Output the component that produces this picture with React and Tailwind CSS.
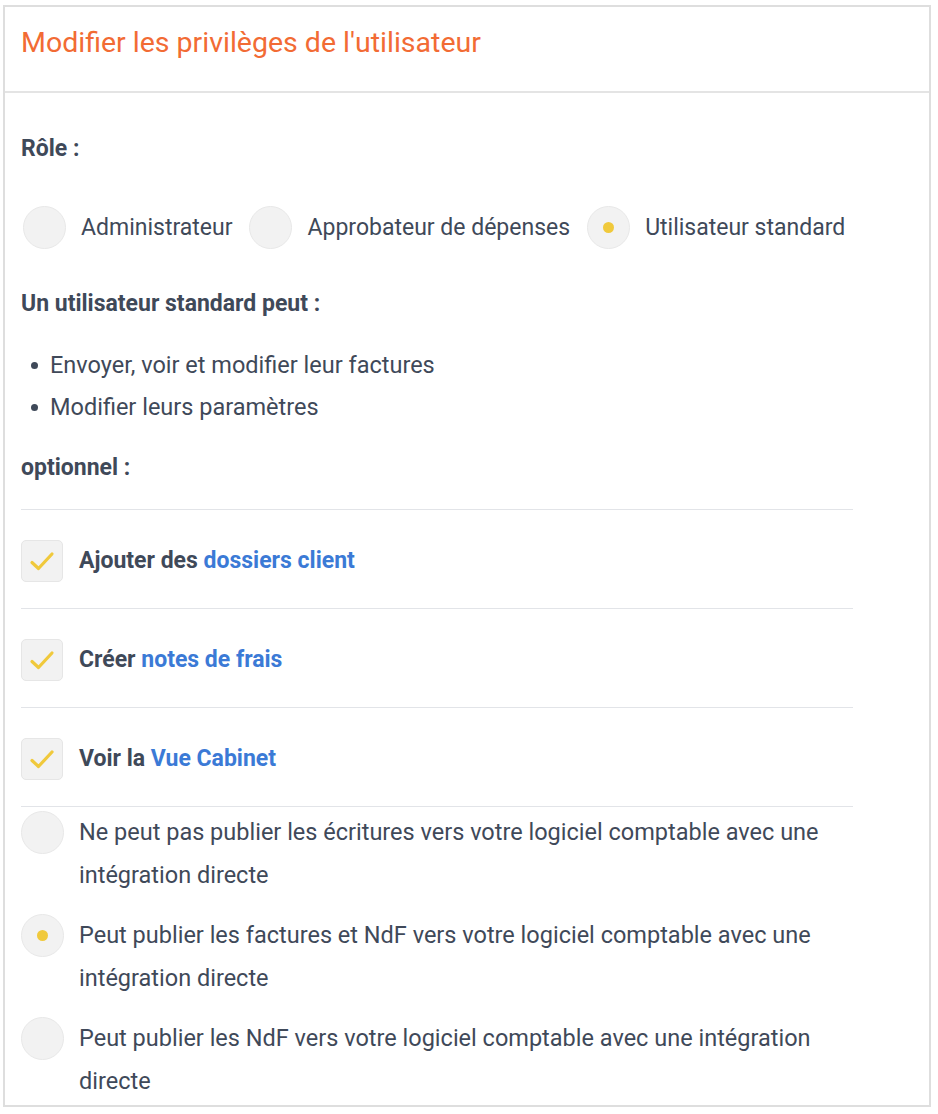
import React from 'react';

const TEXT = 'text-[#3f4959]';

function RadioDot({ checked }) {
  return (
    <span className="w-[43px] h-[43px] shrink-0 rounded-full bg-[#f2f2f2] border border-[#e8e8e8] flex items-center justify-center">
      {checked && <span className="w-[11px] h-[11px] rounded-full bg-[#f0c93c]" />}
    </span>
  );
}

function CheckBox() {
  return (
    <span className="w-[42px] h-[42px] shrink-0 rounded-[5px] bg-[#f2f2f2] border border-[#e6e6e6] flex items-center justify-center">
      <svg width="26" height="22" viewBox="0 0 26 22" fill="none">
        <path d="M3 12.5 L9.5 18.5 L23 4" stroke="#f0c93c" strokeWidth="3.2" strokeLinecap="round" strokeLinejoin="round" />
      </svg>
    </span>
  );
}

const ROLES = [
  { label: 'Administrateur', checked: false },
  { label: 'Approbateur de dépenses', checked: false },
  { label: 'Utilisateur standard', checked: true },
];

const OPTIONS = [
  { text: 'Ajouter des ', link: 'dossiers client' },
  { text: 'Créer ', link: 'notes de frais' },
  { text: 'Voir la ', link: 'Vue Cabinet' },
];

const PUBLISH = [
  { label: 'Ne peut pas publier les écritures vers votre logiciel comptable avec une intégration directe', checked: false },
  { label: 'Peut publier les factures et NdF vers votre logiciel comptable avec une intégration directe', checked: true },
  { label: 'Peut publier les NdF vers votre logiciel comptable avec une intégration directe', checked: false },
];

export default function App() {
  return (
    <div className="bg-white min-h-[1114px] pt-[5px] pl-[3px] font-['Roboto','Liberation_Sans',sans-serif]">
      <div className="w-[928px] border-2 border-[#dedede]">
        <div className="pt-[18px] pb-[30px] pl-[16px] border-b-2 border-[#e4e4e4]">
          <h1 className="text-[28.5px] leading-[36px] text-[#f26b34]">Modifier les privilèges de l'utilisateur</h1>
        </div>

        <div className={`pl-[16px] pr-[76px] pt-[42px] pb-[2px] ${TEXT}`}>
          <p className="text-[23px] leading-[28px] font-bold">Rôle :</p>

          <div className="mt-[43px] pl-[2px] flex items-center gap-[17px]">
            {ROLES.map((r) => (
              <label key={r.label} className="flex items-center gap-[15px]">
                <RadioDot checked={r.checked} />
                <span className="text-[23px] leading-[28px]">{r.label}</span>
              </label>
            ))}
          </div>

          <p className="mt-[41px] text-[23px] leading-[28px] font-bold">Un utilisateur standard peut :</p>

          <ul className="mt-[26px] pl-[10px] text-[23.5px] leading-[42px]">
            <li className="flex items-center gap-[12px]">
              <span className="w-[7px] h-[7px] rounded-full bg-[#3f4959]" />
              Envoyer, voir et modifier leur factures
            </li>
            <li className="flex items-center gap-[12px]">
              <span className="w-[7px] h-[7px] rounded-full bg-[#3f4959]" />
              Modifier leurs paramètres
            </li>
          </ul>

          <p className="mt-[26px] text-[23px] leading-[28px] font-bold">optionnel :</p>

          <div className="mt-[27px] border-t border-[#e2e4e8]">
            {OPTIONS.map((o) => (
              <div key={o.link} className="h-[99px] pt-[30px] border-b border-[#e2e4e8] flex items-start gap-[16px]">
                <CheckBox />
                <span className="text-[23px] leading-[42px] font-bold">
                  {o.text}
                  <span className="text-[#3b7ad6]">{o.link}</span>
                </span>
              </div>
            ))}
          </div>

          <div className="pt-[4px] flex flex-col gap-[17px]">
            {PUBLISH.map((p) => (
              <label key={p.label} className="flex items-start gap-[15px]">
                <RadioDot checked={p.checked} />
                <span className="text-[23.5px] leading-[43px]">{p.label}</span>
              </label>
            ))}
          </div>
        </div>
      </div>
    </div>
  );
}
